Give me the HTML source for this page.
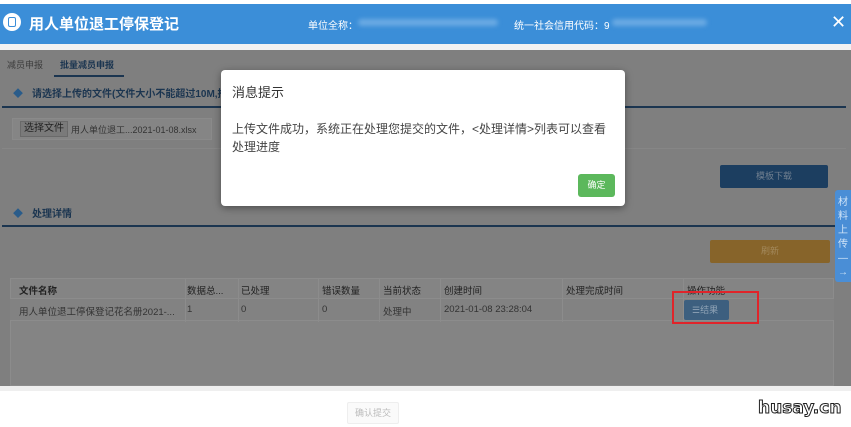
<!DOCTYPE html>
<html><head><meta charset="utf-8"><style>
*{margin:0;padding:0;box-sizing:border-box}
body{width:851px;height:427px;overflow:hidden;background:#fff;font-family:"Liberation Sans","Noto Sans CJK SC",sans-serif;position:relative}
.a{position:absolute}
.hdr{left:0;top:4px;width:851px;height:40px;background:#3b8ed8;color:#fff}
.gray{left:0;top:50px;width:851px;height:336px;background:#7f7f7f}
.t{font-size:10px;color:#1b3550}
.n span{white-space:nowrap}
</style></head><body>
<div class="a hdr">
 <div class="a" style="left:3px;top:9px;width:18px;height:18px;border-radius:50%;background:#fff"></div>
 <div class="a" style="left:8px;top:13px;width:8px;height:10px;border:1.5px solid #3b8ed8;border-radius:2px"></div>
 <div class="a" style="left:29px;top:9px;font-size:15px;font-weight:bold">用人单位退工停保登记</div>
 <div class="a" style="left:308px;top:13px;font-size:10px">单位全称：</div>
 <div class="a" style="left:358px;top:15px;width:140px;height:7px;background:#6aaae3;border-radius:4px;filter:blur(2px)"></div>
 <div class="a" style="left:514px;top:13px;font-size:10px">统一社会信用代码：9</div>
 <div class="a" style="left:612px;top:15px;width:95px;height:7px;background:#6aaae3;border-radius:4px;filter:blur(2px)"></div>
 <div class="a" style="left:831px;top:8px;font-size:18px">✕</div>
</div>
<div class="a" style="left:0;top:44px;width:851px;height:6px;background:#f2f2f2"></div>
<div class="a gray">
 <div class="a" style="left:7px;top:8px;font-size:9px;color:#3d3d3d">减员申报</div>
 <div class="a t" style="left:60px;top:8px;font-size:9px;font-weight:bold">批量减员申报</div>
 <div class="a" style="left:54px;top:25px;width:70px;height:2px;background:#1b3550"></div>
 <div class="a t" style="left:13px;top:35px;color:#2a5c8a">◆</div>
 <div class="a t" style="left:32px;top:35px;font-weight:bold">请选择上传的文件(文件大小不能超过10M,推</div>
 <div class="a" style="left:2px;top:56px;width:844px;height:2px;background:#1b3550"></div>
 <div class="a" style="left:12px;top:68px;width:200px;height:22px;background:#858585;border:1px solid #8a8a8a"></div>
 <div class="a" style="left:20px;top:71px;width:48px;height:16px;background:#7a7a7a;border:1px solid #6a6a6a;font-size:10px;color:#222;text-align:center;line-height:14px">选择文件</div>
 <div class="a" style="left:71px;top:73px;font-size:9px;color:#333">用人单位退工...2021-01-08.xlsx</div>
 <div class="a" style="left:2px;top:98px;width:844px;height:1px;background:#868686"></div>
 <div class="a" style="left:720px;top:115px;width:108px;height:23px;background:#1c3e60;border-radius:2px;font-size:9px;color:#707f8f;text-align:center;line-height:23px">模板下载</div>
 <div class="a t" style="left:13px;top:155px;color:#2a5c8a">◆</div>
 <div class="a t" style="left:32px;top:155px;font-weight:bold">处理详情</div>
 <div class="a" style="left:2px;top:175px;width:844px;height:2px;background:#1b3550"></div>
 <div class="a" style="left:710px;top:190px;width:120px;height:23px;background:#87642a;border-radius:2px;font-size:9px;color:#a3895c;text-align:center;line-height:23px">刷新</div>
 <div class="a" style="left:835px;top:140px;width:16px;height:92px;background:#4a8ed6;border-radius:3px 0 0 3px;color:#cfe3f7;font-size:10px;line-height:14px;padding:6px 0 0 3px;overflow:hidden">材<br>料<br>上<br>传<br>—<br>→</div>
 <div class="a" style="left:10px;top:228px;width:824px;height:108px;background:#848484;border:1px solid #8c8c8c"></div>
 <div class="a" style="left:10px;top:228px;width:824px;height:21px;border-bottom:1px solid #8c8c8c"></div>
 <div class="a" style="left:10px;top:249px;width:824px;height:22px;background:#828282;border-bottom:1px solid #8c8c8c"></div>
 <div class="a n" style="left:0;top:0;font-size:9.5px;color:#222">
  <span class="a" style="left:19px;top:233px;font-weight:bold">文件名称</span>
  <span class="a" style="left:187px;top:233px">数据总...</span>
  <span class="a" style="left:241px;top:233px">已处理</span>
  <span class="a" style="left:322px;top:233px">错误数量</span>
  <span class="a" style="left:383px;top:233px">当前状态</span>
  <span class="a" style="left:444px;top:233px">创建时间</span>
  <span class="a" style="left:566px;top:233px">处理完成时间</span>
  <span class="a" style="left:687px;top:233px">操作功能</span>
  <span class="a" style="left:19px;top:254px;color:#333">用人单位退工停保登记花名册2021-...</span>
  <span class="a" style="left:187px;top:254px;color:#333">1</span>
  <span class="a" style="left:241px;top:254px;color:#333">0</span>
  <span class="a" style="left:322px;top:254px;color:#333">0</span>
  <span class="a" style="left:383px;top:254px;color:#333">处理中</span>
  <span class="a" style="left:444px;top:254px;color:#333">2021-01-08 23:28:04</span>
 </div>
 <div class="a" style="left:185px;top:228px;width:1px;height:44px;background:#8c8c8c"></div>
 <div class="a" style="left:238px;top:228px;width:1px;height:44px;background:#8c8c8c"></div>
 <div class="a" style="left:318px;top:228px;width:1px;height:44px;background:#8c8c8c"></div>
 <div class="a" style="left:379px;top:228px;width:1px;height:44px;background:#8c8c8c"></div>
 <div class="a" style="left:440px;top:228px;width:1px;height:44px;background:#8c8c8c"></div>
 <div class="a" style="left:562px;top:228px;width:1px;height:44px;background:#8c8c8c"></div>
 <div class="a" style="left:683px;top:228px;width:1px;height:44px;background:#8c8c8c"></div>
 <div class="a" style="left:684px;top:250px;width:45px;height:20px;background:#3d5f7f;border-radius:2px;font-size:9px;color:#8fa3b6;line-height:20px;padding-left:8px;white-space:nowrap">☰结果</div>
 <div class="a" style="left:672px;top:241px;width:87px;height:33px;border:2px solid #e0242a"></div>
</div>
<div class="a" style="left:0;top:386px;width:851px;height:5px;background:#efefef"></div>
<div class="a" style="left:347px;top:402px;width:52px;height:22px;border:1px solid #eee;background:#fafafa;border-radius:2px;font-size:9px;color:#bbb;text-align:center;line-height:20px">确认提交</div>
<div class="a" style="left:758px;top:398px;font-size:17px;font-weight:bold;color:#fff;-webkit-text-stroke:1px #222;font-family:'DejaVu Sans',sans-serif">husay.cn</div>
<div class="a" style="left:221px;top:70px;width:404px;height:136px;background:#fff;border-radius:4px;box-shadow:0 2px 8px rgba(0,0,0,.4)">
 <div class="a" style="left:11px;top:12px;font-size:13px;color:#333">消息提示</div>
 <div class="a" style="left:11px;top:50px;width:386px;font-size:12px;color:#444;line-height:18px">上传文件成功，系统正在处理您提交的文件，&lt;处理详情&gt;列表可以查看<br>处理进度</div>
 <div class="a" style="left:357px;top:104px;width:37px;height:23px;background:#5cb85c;border-radius:3px;font-size:9px;color:#fff;text-align:center;line-height:23px">确定</div>
</div>
</body></html>
